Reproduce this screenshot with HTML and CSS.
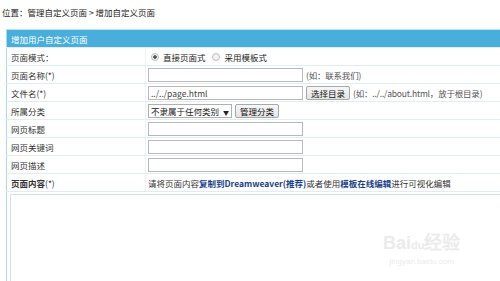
FILE: index.html
```html
<!DOCTYPE html>
<html lang="zh-CN">
<head>
    <meta charset="UTF-8">
    <title>增加自定义页面</title>
    <link rel="stylesheet" href="styles.css">
</head>
<body>
    <div class="crumb">位置：管理自定义页面 &gt; 增加自定义页面</div>

    <table class="form-table">
        <tr class="head">
            <td colspan="2">增加用户自定义页面</td>
        </tr>
        <tr>
            <td class="label">页面模式：</td>
            <td class="field">
                <span class="radio checked"></span><span class="opt">直接页面式</span>
                <span class="radio"></span><span class="opt">采用模板式</span>
            </td>
        </tr>
        <tr>
            <td class="label">页面名称(*)</td>
            <td class="field"><span class="input"></span><span class="hint">(如：联系我们)</span></td>
        </tr>
        <tr>
            <td class="label">文件名(*)</td>
            <td class="field"><span class="input">../../page.html</span><span class="btn">选择目录</span><span class="hint">(如：../../about.html，放于根目录)</span></td>
        </tr>
        <tr>
            <td class="label">所属分类</td>
            <td class="field"><span class="select">不隶属于任何类别 <span class="arrow">▼</span></span><span class="btn">管理分类</span></td>
        </tr>
        <tr>
            <td class="label">网页标题</td>
            <td class="field"><span class="input"></span></td>
        </tr>
        <tr>
            <td class="label">网页关键词</td>
            <td class="field"><span class="input"></span></td>
        </tr>
        <tr>
            <td class="label">网页描述</td>
            <td class="field"><span class="input"></span></td>
        </tr>
        <tr>
            <td class="label"><b>页面内容</b>(*)</td>
            <td class="field">请将页面内容<b class="em">复制到Dreamweaver(推荐)</b>或者使用<b class="em">模板在线编辑</b>进行可视化编辑</td>
        </tr>
        <tr class="editor-row">
            <td colspan="2"><div class="editor"></div></td>
        </tr>
    </table>

    <div class="watermark">
        <div class="wm-logo">Bai<span class="paw">du</span>经验</div>
        <div class="wm-url">jingyan.baidu.com</div>
    </div>
</body>
</html>
```

FILE: styles.css
```css
body {
    margin: 0;
    font-family: "Noto Sans CJK SC", "DejaVu Sans", sans-serif;
    font-size: 8.5px;
    color: #333;
    background: #fff;
    overflow: hidden;
    position: relative;
    height: 281px;
}
.crumb {
    height: 25px;
    line-height: 24px;
    padding-left: 2px;
    color: #222;
}
.form-table {
    margin: 4px 0 0 6px;
    width: 494px;
    border-collapse: collapse;
    border: 1px solid #a9d9e8;
    border-right: none;
    border-bottom: none;
}
.form-table td {
    height: 17px;
    padding: 0;
    border-bottom: 1px solid #e1edf2;
    vertical-align: middle;
    white-space: nowrap;
}
.head td {
    background-color: #4aaedb;
    color: #fff;
    padding-left: 4px;
    border-top: 1px solid #b6e6f0;
}
.label {
    width: 134px;
    padding-left: 4px !important;
    border-right: 1px solid #eef4f6;
    color: #333;
}
.field {
    padding-left: 2px !important;
}
.input {
    display: inline-block;
    box-sizing: border-box;
    width: 155px;
    height: 14px;
    line-height: 12px;
    border: 1px solid #b9b9b9;
    padding-left: 2px;
    vertical-align: middle;
    color: #444;
}
.hint {
    color: #555;
    margin-left: 3px;
    vertical-align: middle;
    letter-spacing: -0.2px;
}
.btn {
    display: inline-block;
    box-sizing: border-box;
    height: 14px;
    line-height: 12px;
    padding: 0 4px;
    margin-left: 3px;
    border: 1px solid #a8a8a8;
    border-radius: 2px;
    background: linear-gradient(#f7f7f7, #e3e3e3);
    color: #111;
    vertical-align: middle;
}
.select {
    display: inline-block;
    box-sizing: border-box;
    width: 84px;
    height: 14px;
    line-height: 12px;
    padding-left: 2px;
    border: 1px solid #b0b0b0;
    color: #222;
    vertical-align: middle;
}
.arrow {
    font-size: 6px;
    margin-left: 2px;
}
.radio {
    display: inline-block;
    box-sizing: border-box;
    width: 8px;
    height: 8px;
    margin: 0 4px 0 3px;
    border: 1px solid #bdbdbd;
    border-radius: 50%;
    background: #f2f2f2;
    vertical-align: middle;
}
.radio.checked {
    background: radial-gradient(circle, #555 0, #555 1.5px, #f2f2f2 2px);
}
.opt {
    vertical-align: middle;
    margin-right: 2px;
    color: #222;
}
.em {
    color: #1b3f8b;
}
.editor-row td {
    height: auto;
    padding: 2px 0 0 3px;
    border-bottom: none;
}
.editor {
    height: 86px;
    border: 1px solid #d6dfe3;
    border-right: none;
    border-bottom: none;
}
.watermark {
    position: absolute;
    left: 383px;
    top: 232px;
    color: #ebebeb;
    text-align: center;
}
.wm-logo {
    font-family: "Liberation Sans", sans-serif;
    font-size: 18px;
    font-weight: bold;
    line-height: 22px;
}
.paw {
    font-size: 11px;
}
.wm-url {
    font-family: "Liberation Sans", sans-serif;
    font-size: 8px;
    line-height: 12px;
}
```
